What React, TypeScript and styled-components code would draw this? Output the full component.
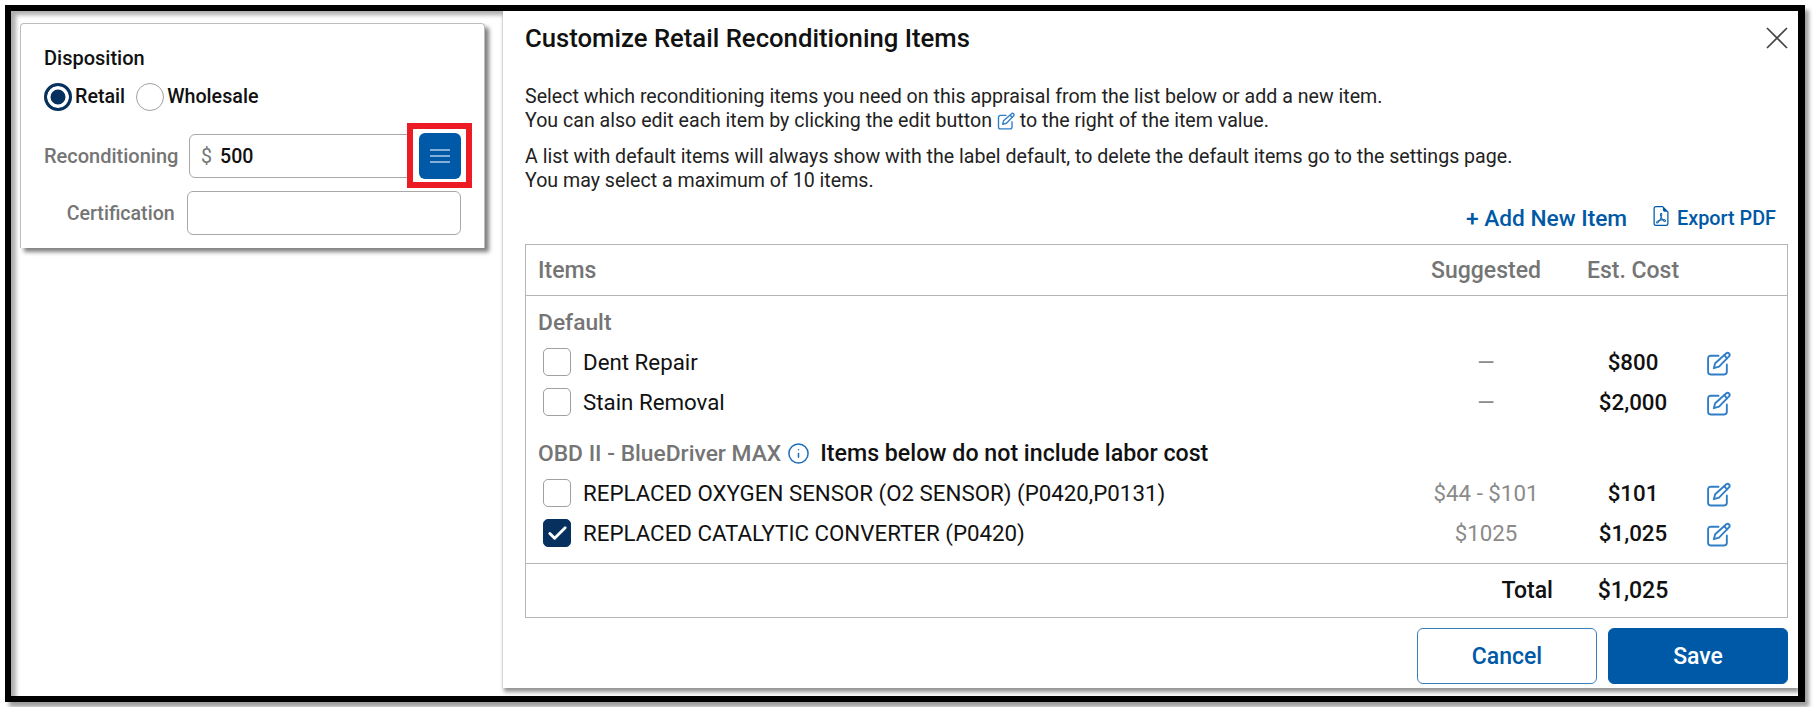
import React from 'react'
import { Check, Info } from 'lucide-react'
import { BsFileEarmarkPdf } from 'react-icons/bs'
import styled, { createGlobalStyle } from 'styled-components'

const brand = '#0059a6'
const navy = '#06315f'
const muted = '#757575'
const line = '#b5b5b5'

const GlobalStyle = createGlobalStyle`
  html, body {
    margin: 0;
    background: #fff;
    font-family: Roboto, "Liberation Sans", sans-serif;
    color: #111;
  }
  * { box-sizing: border-box; }
`

const Frame = styled.div`
  display: flex;
  width: 1800px;
  height: 697px;
  margin: 5px;
  background: #fff;
  border-style: solid;
  border-color: #000;
  border-width: 6px 7px 6px 6px;
  box-shadow: 4px 5px 4px rgba(0, 0, 0, .38), inset 5px 4px 4px rgba(0, 0, 0, .32);
`

const LeftPane = styled.div`
  flex: 0 0 492px;
  padding: 12px 0 0 9px;
`

const Card = styled.div`
  width: 465px;
  height: 225px;
  padding: 22px 23px 0;
  background: #fff;
  border: 1px solid #bdbdbd;
  border-bottom: none;
  border-radius: 4px 4px 0 0;
  box-shadow: 4px 4px 4px rgba(0, 0, 0, .5);
`

const CardTitle = styled.div`
  font-size: 20px;
  font-weight: 500;
  line-height: 24px;
`

const RadioRow = styled.div`
  display: flex;
  align-items: center;
  height: 27px;
  margin-top: 13px;
  gap: 11px;
`

const RadioLabel = styled.label`
  display: flex;
  align-items: center;
  gap: 3px;
  font-size: 19.7px;
  font-weight: 500;
`

const Radio = styled.span<{ $checked?: boolean }>`
  display: block;
  width: 28px;
  height: 28px;
  border-radius: 50%;
  background: ${(props) => (props.$checked ? navy : '#fff')};
  border: ${(props) => (props.$checked ? `3px solid ${navy}` : '1.5px solid #a0a0a0')};
  box-shadow: ${(props) => (props.$checked ? 'inset 0 0 0 3.5px #fff' : 'none')};
`

const FormRow = styled.div<{ $top: number }>`
  display: flex;
  align-items: center;
  margin-top: ${(props) => props.$top}px;
`

const FormLabel = styled.div<{ $width: number; $size: number }>`
  width: ${(props) => props.$width}px;
  margin-right: 12px;
  text-align: right;
  font-size: ${(props) => props.$size}px;
  font-weight: 500;
  color: ${muted};
  white-space: nowrap;
`

const InputBox = styled.div<{ $width: number }>`
  display: flex;
  align-items: center;
  width: ${(props) => props.$width}px;
  height: 44px;
  padding-left: 11px;
  border: 1.5px solid #a8a8a8;
  border-radius: 6px;
  background: #fff;
  font-size: 19.6px;
  font-weight: 500;
`

const Dollar = styled.span`
  margin-right: 8px;
  color: ${muted};
  font-weight: 400;
`

const MenuWrap = styled.div`
  position: relative;
  width: 43px;
  height: 46px;
`

const Highlight = styled.div`
  position: absolute;
  inset: -10px -11px -9px -12px;
  background: #fff;
  border: 6px solid #ed1c24;
`

const MenuButton = styled.button`
  position: relative;
  display: flex;
  flex-direction: column;
  align-items: center;
  justify-content: center;
  gap: 3.5px;
  width: 100%;
  height: 100%;
  padding: 0;
  border: none;
  border-radius: 6px;
  background: ${brand};
`

const MenuLine = styled.span`
  width: 20px;
  height: 2.5px;
  background: #86afd6;
`

const Modal = styled.div`
  flex: 1;
  height: 677px;
  padding: 0 10px 0 22px;
  background: #fff;
  box-shadow: 1px 4px 4px rgba(0, 0, 0, .42), -1px 0 1px rgba(0, 0, 0, .05);
`

const ModalHeader = styled.div`
  display: flex;
  align-items: center;
  justify-content: space-between;
  height: 54px;
`

const ModalTitle = styled.h2`
  margin: 0;
  font-size: 25.7px;
  font-weight: 500;
`

const CloseButton = styled.button`
  display: flex;
  padding: 0;
  border: none;
  background: none;
`

const Intro = styled.p`
  margin: 0;
  font-size: 19.6px;
  line-height: 24px;
  color: #222;

  & + & {
    margin-top: 12px;
  }

  svg {
    vertical-align: -3px;
  }
`

const IntroEdit = styled.span`
  color: #2f7ec6;
`

const IntroBlock = styled.div`
  padding-top: 20px;
`

const Actions = styled.div`
  display: flex;
  align-items: center;
  justify-content: flex-end;
  gap: 24px;
  height: 26px;
  margin: 12px 12px 13px 0;
`

const ActionLink = styled.a<{ $size: number }>`
  display: flex;
  align-items: center;
  gap: 6px;
  font-size: ${(props) => props.$size}px;
  font-weight: 500;
  color: ${brand};

  svg {
    margin-top: -4px;
  }
`

const Table = styled.div`
  height: 374px;
  border: 1.5px solid ${line};
`

const Row = styled.div`
  display: grid;
  grid-template-columns: 1fr 150px 144px 82px;
  align-items: center;
`

const HeadRow = styled(Row)`
  height: 51px;
  padding: 1px 0 0 12px;
  border-bottom: 1.5px solid ${line};
  font-size: 23px;
  font-weight: 500;
  color: ${muted};
`

const Center = styled.div<{ $muted?: boolean; $bold?: boolean }>`
  text-align: center;
  color: ${(props) => (props.$muted ? '#8a8a8a' : 'inherit')};
  font-weight: ${(props) => (props.$bold ? 500 : 400)};
`

const HeadCell = styled.div`
  text-align: center;
`

const Body = styled.div`
  padding: 6px 0 10px;
  border-bottom: 1.5px solid ${line};
`

const SectionHead = styled.div<{ $top?: number }>`
  display: flex;
  align-items: center;
  height: 40px;
  margin-top: ${(props) => props.$top ?? 0}px;
  padding-left: 12px;
  font-size: 22.8px;
  font-weight: 500;
  color: ${muted};
`

const SectionNote = styled.span`
  margin-left: 10px;
  font-size: 23.2px;
  color: #111;
`

const InfoIcon = styled(Info)`
  margin-left: 6px;
  color: #1f70b8;
`

const ItemRow = styled(Row)`
  height: 40px;
  padding-left: 17px;
  font-size: 22.3px;
`

const ItemLabel = styled.div`
  display: flex;
  align-items: center;
  gap: 12px;
`

const CheckBox = styled.span<{ $checked?: boolean }>`
  display: flex;
  align-items: center;
  justify-content: center;
  width: 28px;
  height: 28px;
  border: 1.5px solid ${(props) => (props.$checked ? navy : '#a0a0a0')};
  border-radius: 5px;
  background: ${(props) => (props.$checked ? navy : '#fff')};
  color: #fff;
`

const EditButton = styled.span`
  display: flex;
  padding: 2px 0 0 1px;
  color: #2f7ec6;
`

const TotalRow = styled(Row)`
  height: 52px;
  font-size: 23px;
  font-weight: 500;
`

const TotalLabel = styled.div`
  grid-column: 2;
  padding-right: 8px;
  text-align: right;
`

const Footer = styled.div`
  display: flex;
  justify-content: flex-end;
  gap: 11px;
  margin-top: 10px;
`

const FooterButton = styled.button<{ $primary?: boolean }>`
  width: 180px;
  height: 56px;
  border: 1.5px solid ${(props) => (props.$primary ? brand : '#3a80bd')};
  border-radius: 6px;
  background: ${(props) => (props.$primary ? brand : '#fff')};
  color: ${(props) => (props.$primary ? '#fff' : brand)};
  font-family: inherit;
  font-size: 23px;
  font-weight: 500;
`

const EditIcon = ({ size }: { size: number }) => (
  <svg width={size} height={size} viewBox="0 0 24 24" fill="none" stroke="currentColor" strokeWidth="1.8" strokeLinecap="round" strokeLinejoin="round">
    <path d="M12 4.500H4.500A2.500 2.500 0 0 0 2 7v13a2.500 2.500 0 0 0 2.500 2.500h13A2.500 2.500 0 0 0 20 20v-7" />
    <path d="M19.500 2.200a2 2 0 0 1 2.800 2.800L12.500 15l-5 1.500 1.300-4.800z" />
    <path d="M17.500 4.200l2.800 2.800" />
  </svg>
)

const defaults = [
  { name: 'Dent Repair', suggested: '—', cost: '$800' },
  { name: 'Stain Removal', suggested: '—', cost: '$2,000' },
]

const obdItems = [
  { name: 'REPLACED OXYGEN SENSOR (O2 SENSOR) (P0420,P0131)', suggested: '$44 - $101', cost: '$101' },
  { name: 'REPLACED CATALYTIC CONVERTER (P0420)', suggested: '$1025', cost: '$1,025', checked: true },
]

type Item = { name: string; suggested: string; cost: string; checked?: boolean }

const ItemLine = ({ item }: { item: Item }) => (
  <ItemRow>
    <ItemLabel>
      <CheckBox $checked={item.checked}>
        {item.checked && <Check size={23} strokeWidth={3} />}
      </CheckBox>
      {item.name}
    </ItemLabel>
    <Center $muted>{item.suggested}</Center>
    <Center $bold>{item.cost}</Center>
    <EditButton><EditIcon size={25} /></EditButton>
  </ItemRow>
)

const App = () => (
  <>
    <GlobalStyle />
    <Frame>
      <LeftPane>
        <Card>
          <CardTitle>Disposition</CardTitle>
          <RadioRow>
            <RadioLabel><Radio $checked />Retail</RadioLabel>
            <RadioLabel><Radio />Wholesale</RadioLabel>
          </RadioRow>
          <FormRow $top={23}>
            <FormLabel $width={133} $size={20}>Reconditioning</FormLabel>
            <InputBox $width={232}>
              <Dollar>$</Dollar>500
            </InputBox>
            <MenuWrap>
              <Highlight />
              <MenuButton>
                <MenuLine />
                <MenuLine />
                <MenuLine />
              </MenuButton>
            </MenuWrap>
          </FormRow>
          <FormRow $top={12}>
            <FormLabel $width={131} $size={19.6}>Certification</FormLabel>
            <InputBox $width={275} />
          </FormRow>
        </Card>
      </LeftPane>
      <Modal>
        <ModalHeader>
          <ModalTitle>Customize Retail Reconditioning Items</ModalTitle>
          <CloseButton>
            <svg width="22" height="22" viewBox="0 0 22 22" fill="none" stroke="#444" strokeWidth="1.7">
              <path d="M1 1 21 21M21 1 1 21" />
            </svg>
          </CloseButton>
        </ModalHeader>
        <IntroBlock>
          <Intro>
            Select which reconditioning items you need on this appraisal from the list below or add a new item.
            <br />
            You can also edit each item by clicking the edit button <IntroEdit><EditIcon size={18} /></IntroEdit> to the right of the item value.
          </Intro>
          <Intro>
            A list with default items will always show with the label default, to delete the default items go to the settings page.
            <br />
            You may select a maximum of 10 items.
          </Intro>
        </IntroBlock>
        <Actions>
          <ActionLink $size={22.7}>+ Add New Item</ActionLink>
          <ActionLink $size={19.8}><BsFileEarmarkPdf size={20} />Export PDF</ActionLink>
        </Actions>
        <Table>
          <HeadRow>
            <div>Items</div>
            <HeadCell>Suggested</HeadCell>
            <HeadCell>Est. Cost</HeadCell>
          </HeadRow>
          <Body>
            <SectionHead>Default</SectionHead>
            {defaults.map((item) => <ItemLine key={item.name} item={item} />)}
            <SectionHead $top={11}>
              OBD II - BlueDriver MAX
              <InfoIcon size={23} strokeWidth={1.6} />
              <SectionNote>Items below do not include labor cost</SectionNote>
            </SectionHead>
            {obdItems.map((item) => <ItemLine key={item.name} item={item} />)}
          </Body>
          <TotalRow>
            <TotalLabel>Total</TotalLabel>
            <Center $bold>$1,025</Center>
          </TotalRow>
        </Table>
        <Footer>
          <FooterButton>Cancel</FooterButton>
          <FooterButton $primary>Save</FooterButton>
        </Footer>
      </Modal>
    </Frame>
  </>
)

export default App
